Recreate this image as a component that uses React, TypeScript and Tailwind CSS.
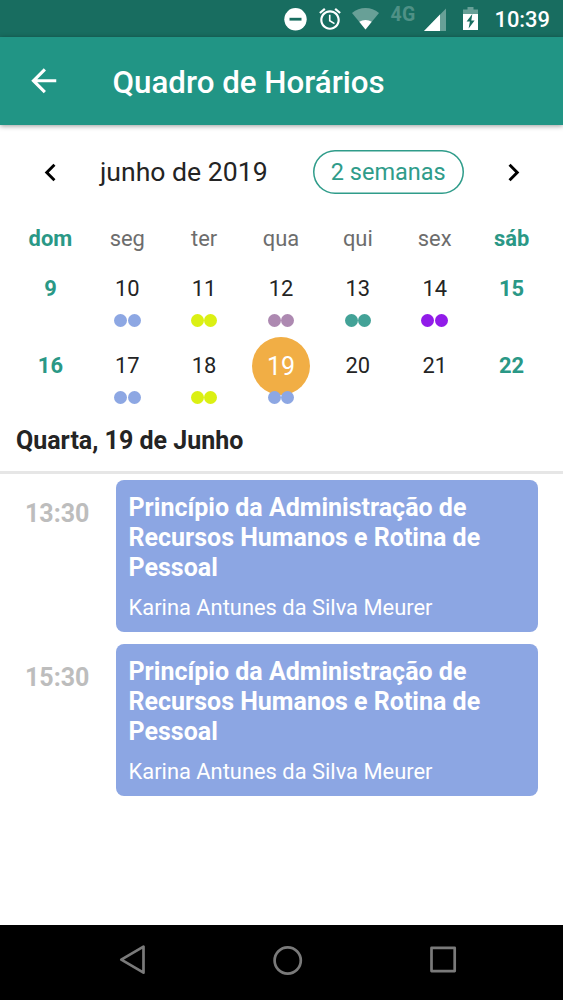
import React from 'react';
import clsx from 'clsx';

interface Day {
    number: number;
    dot?: string;
    weekend?: boolean;
    selected?: boolean;
}

interface Lesson {
    time: string;
    subject: string;
    teacher: string;
}

const WEEKDAYS = ['dom', 'seg', 'ter', 'qua', 'qui', 'sex', 'sáb'];

const WEEKS: Day[][] = [
    [
        { number: 9, weekend: true },
        { number: 10, dot: 'bg-[#8da7e3]' },
        { number: 11, dot: 'bg-[#dbf013]' },
        { number: 12, dot: 'bg-[#ad89b1]' },
        { number: 13, dot: 'bg-[#43a297]' },
        { number: 14, dot: 'bg-[#911be9]' },
        { number: 15, weekend: true },
    ],
    [
        { number: 16, weekend: true },
        { number: 17, dot: 'bg-[#8da7e3]' },
        { number: 18, dot: 'bg-[#dbf013]' },
        { number: 19, dot: 'bg-[#8da7e3]', selected: true },
        { number: 20 },
        { number: 21 },
        { number: 22, weekend: true },
    ],
];

const LESSONS: Lesson[] = [
    {
        time: '13:30',
        subject:
            'Princípio da Administração de Recursos Humanos e Rotina de Pessoal',
        teacher: 'Karina Antunes da Silva Meurer',
    },
    {
        time: '15:30',
        subject:
            'Princípio da Administração de Recursos Humanos e Rotina de Pessoal',
        teacher: 'Karina Antunes da Silva Meurer',
    },
];

function StatusBar() {
    return (
        <div className="flex h-[37px] shrink-0 items-start justify-end bg-[#186d60] pr-[13px] text-white">
            {/* Não perturbe */}
            <svg className="mt-[8px] h-[23px] w-[23px]" viewBox="0 0 23 23">
                <circle cx="11.5" cy="11.3" r="11.2" fill="white" />
                <path d="M5.5 9.8h12v2.8h-12z" fill="#186d60" />
            </svg>
            {/* Alarme */}
            <svg
                className="mt-[6px] ml-[10px] h-[26px] w-[26px]"
                viewBox="0 0 24 24"
                fill="white"
            >
                <path d="M22 5.72l-4.6-3.86-1.29 1.53 4.6 3.86L22 5.72zM7.88 3.39L6.6 1.86 2 5.71l1.29 1.53 4.59-3.85zM12.5 8H11v6l4.75 2.85.75-1.23-4-2.37V8zM12 4c-4.97 0-9 4.03-9 9s4.02 9 9 9c4.97 0 9-4.03 9-9s-4.03-9-9-9zm0 16c-3.87 0-7-3.13-7-7s3.13-7 7-7 7 3.13 7 7-3.13 7-7 7z" />
            </svg>
            {/* Wi-Fi */}
            <svg
                className="mt-[8px] ml-[9px] h-[22px] w-[27px]"
                viewBox="0 0 27 22"
                fill="white"
            >
                <path
                    d="M13.5 21.5 0 5Q6 0 13.5 0T27 5Z"
                    fillOpacity="0.35"
                />
                <path d="M13.5 21.5 7.3 13.8Q10 11.9 13.5 11.9t6.2 1.9Z" />
            </svg>
            <span className="mt-[5px] ml-[11px] w-[27px] text-[19.5px] leading-[20px] font-bold tracking-[0.3px] text-[#4f9186]">
                4G
            </span>
            {/* Sinal */}
            <svg
                className="mt-[8px] ml-[7px] h-[23px] w-[22px]"
                viewBox="0 0 22 23"
                fill="white"
            >
                <path d="M22 .5V23H0z" fillOpacity="0.35" />
                <path d="M16 6.6V23H0z" />
            </svg>
            {/* Bateria */}
            <svg
                className="mt-[7px] ml-[17px] h-[24px] w-[15px]"
                viewBox="0 0 15 24"
                fill="white"
            >
                <path d="M4.5 0h6v2.5H15V7H0V2.5h4.5z" fillOpacity="0.35" />
                <path d="M0 7h15v16H0z" />
                <path
                    d="M9.3 7 3.6 14.6h3.3L5.6 21.5l6-8H8.3z"
                    fill="#186d60"
                />
            </svg>
            <span className="mt-[7px] ml-[16px] text-[21.9px] leading-[26px] font-medium">
                10:39
            </span>
        </div>
    );
}

function Header() {
    return (
        <header className="z-10 flex h-[88px] shrink-0 items-center bg-[#219585] pl-[25px] text-white shadow-[0_1px_5px_rgba(0,0,0,0.4)]">
            <button aria-label="Voltar">
                <svg
                    className="h-[37.5px] w-[37.5px]"
                    viewBox="0 0 24 24"
                    fill="currentColor"
                >
                    <path d="M20 11H7.83l5.59-5.59L12 4l-8 8 8 8 1.41-1.41L7.83 13H20v-2z" />
                </svg>
            </button>
            <h1 className="ml-[50px] pt-[4px] text-[31.3px] leading-[36px] font-medium">
                Quadro de Horários
            </h1>
        </header>
    );
}

function MonthNav() {
    return (
        <div className="mt-[25px] flex h-[44px] items-center pr-[32.5px] pl-[32.5px]">
            <button aria-label="Anterior">
                <svg className="h-[35px] w-[35px]" viewBox="0 0 24 24">
                    <path d="M15.41 7.41 14 6l-6 6 6 6 1.41-1.41L10.83 12z" />
                </svg>
            </button>
            <span className="ml-[32.5px] text-[26.6px] leading-[32px]">
                junho de 2019
            </span>
            <button className="ml-auto flex h-[44px] w-[150.5px] items-center justify-center rounded-full pt-[1px] text-[23.5px] text-[#2f9c8a] inset-ring-[1.5px] inset-ring-[#2f9c8a]">
                2 semanas
            </button>
            <button aria-label="Próximo" className="ml-[32px]">
                <svg className="h-[35px] w-[35px]" viewBox="0 0 24 24">
                    <path d="M8.59 16.59 10 18l6-6-6-6-1.41 1.41L13.17 12z" />
                </svg>
            </button>
        </div>
    );
}

function DayCell({ day }: { day: Day }) {
    return (
        <div className="flex h-[77px] flex-col items-center">
            <div
                className={clsx(
                    'flex h-[58px] w-[58px] shrink-0 items-center justify-center rounded-full pt-[1.5px]',
                    day.selected
                        ? 'bg-[#f1ae45] text-[25px] text-white'
                        : 'text-[21.9px]',
                    day.weekend && 'font-bold text-[#2a9886]',
                )}
            >
                {day.number}
            </div>
            {day.dot && (
                <div className="mt-[-3.5px] flex gap-[0.5px]">
                    <span
                        className={clsx(
                            'h-[13px] w-[13px] rounded-full',
                            day.dot,
                        )}
                    />
                    <span
                        className={clsx(
                            'h-[13px] w-[13px] rounded-full',
                            day.dot,
                        )}
                    />
                </div>
            )}
        </div>
    );
}

function Calendar() {
    return (
        <div className="pr-[13px] pl-[12px]">
            <div className="mt-[28.5px] grid h-[32px] grid-cols-7 items-center text-center text-[21.9px] text-[#6d6d6d]">
                {WEEKDAYS.map((name, i) => (
                    <span
                        key={name}
                        className={clsx(
                            (i === 0 || i === 6) &&
                                'font-bold text-[#2a9886]',
                        )}
                    >
                        {name}
                    </span>
                ))}
            </div>
            <div className="mt-[5px]">
                {WEEKS.map((week, i) => (
                    <div key={i} className="grid grid-cols-7">
                        {week.map((day) => (
                            <DayCell key={day.number} day={day} />
                        ))}
                    </div>
                ))}
            </div>
        </div>
    );
}

function LessonRow({ lesson }: { lesson: Lesson }) {
    return (
        <div className="flex">
            <div className="w-[115.5px] pt-[19px] pl-[25px] text-[25px] leading-[30px] font-bold text-[#bdbdbd]">
                {lesson.time}
            </div>
            <div className="h-[151.5px] w-[422.5px] rounded-[8px] bg-[#8ca6e3] px-[13px] pt-[13px] text-white">
                <p className="text-[25px] leading-[29.8px] font-bold">
                    {lesson.subject}
                </p>
                <p className="mt-[12.5px] text-[21.9px] leading-[26px]">
                    {lesson.teacher}
                </p>
            </div>
        </div>
    );
}

function NavigationBar() {
    return (
        <nav className="flex h-[75px] shrink-0 items-start bg-black pt-[20px] pl-[119px]">
            <svg
                className="h-[30px] w-[28px]"
                viewBox="0 0 28 30"
                fill="none"
                stroke="#7a7a7a"
                strokeWidth="2.7"
                strokeLinejoin="round"
            >
                <path d="M24.5 1.7v26L2.3 14.7z" />
            </svg>
            <svg
                className="ml-[125px] h-[32px] w-[32px]"
                viewBox="0 0 32 32"
                fill="none"
                stroke="#7a7a7a"
                strokeWidth="2.7"
            >
                <circle cx="15.7" cy="15.5" r="13.1" />
            </svg>
            <svg
                className="ml-[125px] h-[30px] w-[28px]"
                viewBox="0 0 28 30"
                fill="none"
                stroke="#7a7a7a"
                strokeWidth="2.7"
                strokeLinejoin="round"
            >
                <path d="M2.5 2.9h23.2v23.2H2.5z" />
            </svg>
        </nav>
    );
}

export default function App() {
    return (
        <div className="flex h-[1000px] w-[563px] flex-col overflow-hidden bg-white font-[Roboto,sans-serif] text-[#242424]">
            <StatusBar />
            <Header />
            <main className="flex-1">
                <MonthNav />
                <Calendar />
                <h2 className="mt-[11.5px] border-b-[3px] border-[#e6e6e6] pb-[15px] pl-[16px] text-[25px] leading-[31px] font-bold">
                    Quarta, 19 de Junho
                </h2>
                <div className="mt-[6.3px] flex flex-col gap-[12.5px]">
                    {LESSONS.map((lesson) => (
                        <LessonRow key={lesson.time} lesson={lesson} />
                    ))}
                </div>
            </main>
            <NavigationBar />
        </div>
    );
}
